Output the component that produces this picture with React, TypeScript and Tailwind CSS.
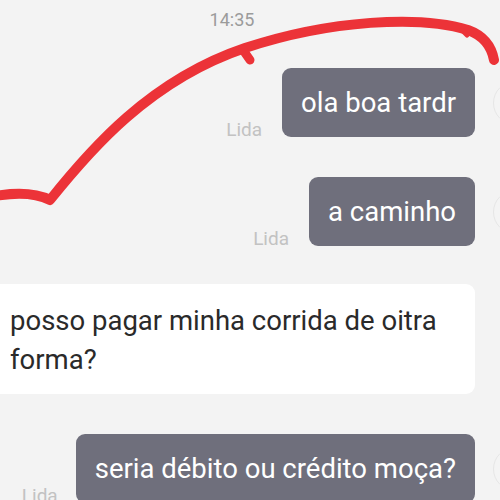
import React from "react";

const font = { fontFamily: "Roboto, 'Noto Sans', Arial, sans-serif" };

function Avatar() {
  return (
    <div className="ml-[18px] mr-[-62px] h-[44px] w-[44px] shrink-0 self-center rounded-full border border-[#e6e6e6] bg-[#f4f4f4]" />
  );
}

function Sent({ text, lidaGap = 20 }: { text: string; lidaGap?: number }) {
  return (
    <div className="flex items-end justify-end pr-[25px]">
      <span
        className="mb-[-2px] text-[19px] leading-none text-[#c2c2c2]"
        style={{ marginRight: lidaGap }}
      >
        Lida
      </span>
      <div className="rounded-[9px] bg-[#6f6f7c] px-[19px] py-[17px] text-[27.5px] leading-[35px] text-white">
        {text}
      </div>
      <Avatar />
    </div>
  );
}

export default function App() {
  return (
    <div
      className="relative h-[500px] w-[500px] overflow-hidden bg-[#f3f3f3]"
      style={font}
    >
      <div className="flex flex-col pt-[8px]">
        <div className="text-center text-[18px] leading-[24px] text-[#9b9b9b] pr-[36px]">
          14:35
        </div>
        <div className="mt-[36px]">
          <Sent text="ola boa tardr" />
        </div>
        <div className="mt-[40px]">
          <Sent text="a caminho" />
        </div>
        <div className="mt-[38px] flex pr-[25px]">
          <div className="ml-[-12px] flex-1 rounded-[9px] bg-white pb-[15px] pl-[22px] pr-[6px] pt-[17px] text-[27.5px] leading-[39px] text-[#2a2a2a]">
            posso pagar minha corrida de oitra
            <br />
            forma?
          </div>
        </div>
        <div className="mt-[40px]">
          <Sent text="seria débito ou crédito moça?" lidaGap={18} />
        </div>
      </div>
      <svg
        className="pointer-events-none absolute left-0 top-0"
        width="500"
        height="500"
        viewBox="0 0 500 500"
      >
        <path
          d="M -5 196 Q 30 190 50 200 C 90 150, 150 80, 245 48 C 330 20, 420 15, 468 30 Q 490 38, 494 60"
          fill="none"
          stroke="#ec3338"
          strokeWidth="10"
          strokeLinecap="round"
          strokeLinejoin="round"
        />
        <path
          d="M 243 50 L 250 60"
          fill="none"
          stroke="#ec3338"
          strokeWidth="9"
          strokeLinecap="round"
        />
        <path
          d="M 462 30 L 467 35"
          fill="none"
          stroke="#ec3338"
          strokeWidth="5"
          strokeLinecap="round"
        />
      </svg>
    </div>
  );
}
